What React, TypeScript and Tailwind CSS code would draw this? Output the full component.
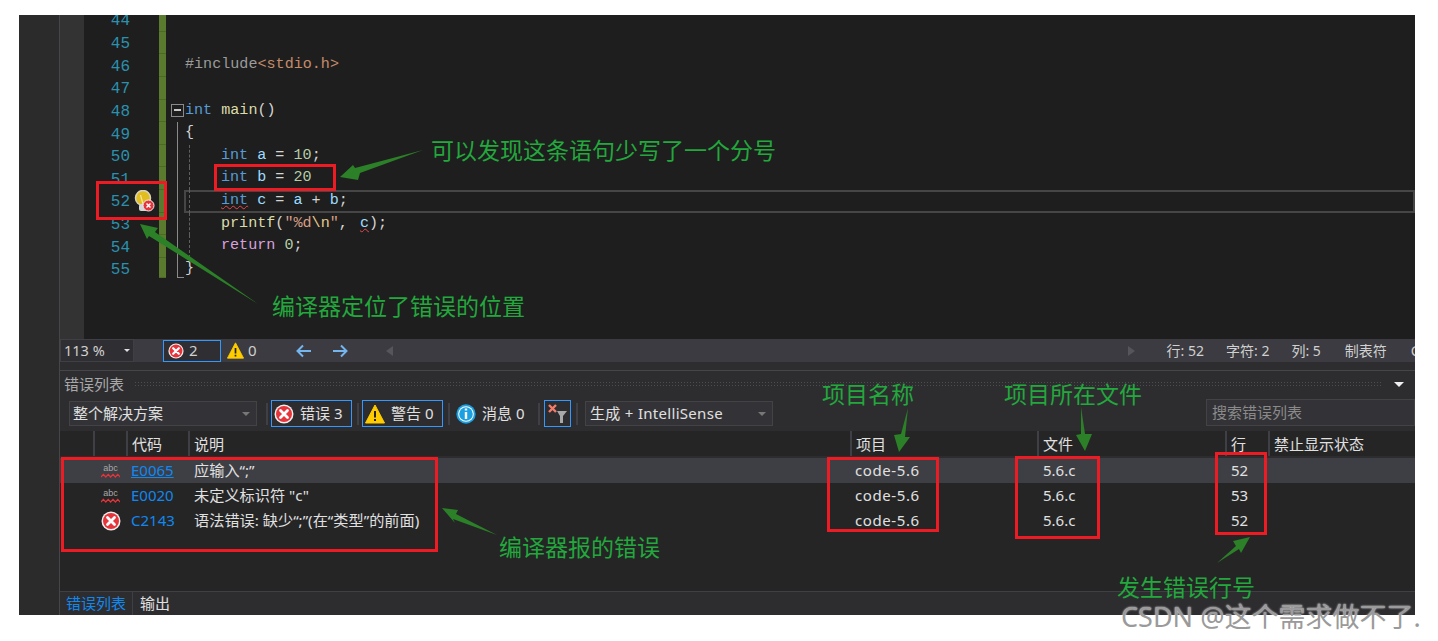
import React from 'react';

const ErrorIcon = ({ size = 20 }: { size?: number }) => (
  <svg width={size} height={size} viewBox="0 0 20 20" className="shrink-0">
    <circle cx="10" cy="10" r="9.5" fill="#f0f0f0" />
    <circle cx="10" cy="10" r="8" fill="#e5343a" />
    <path d="M6.5 6.5l7 7M13.5 6.5l-7 7" stroke="#fff" strokeWidth="2.8" strokeLinecap="round" />
  </svg>
);

const WarnIcon = ({ size = 20 }: { size?: number }) => (
  <svg width={size} height={size} viewBox="0 0 20 20" className="shrink-0">
    <path d="M10 1L19.5 19H0.5z" fill="#fc0" stroke="#fc0" strokeLinejoin="round" />
    <path d="M10 7v6.5M10 15v2" stroke="#222" strokeWidth="2" />
  </svg>
);

const InfoIcon = () => (
  <svg width="20" height="20" viewBox="0 0 20 20" className="shrink-0">
    <circle cx="10" cy="10" r="9.7" fill="#1ba1e2" />
    <circle cx="10" cy="10" r="7.8" fill="#fff" />
    <circle cx="10" cy="10" r="6.8" fill="#1ba1e2" />
    <path d="M10 8v7M10 4.5v2" stroke="#fff" strokeWidth="2.4" />
  </svg>
);

const AbcIcon = () => (
  <div className="flex flex-col items-center w-[19px] leading-none">
    <span className="text-[9px] leading-[10px] text-[#a8a8a8] [font-family:'Liberation_Sans',sans-serif]">abc</span>
    <svg width="19" height="5" viewBox="0 0 19 5">
      <path d="M0 4l2.4-2.6 2.4 2.6 2.4-2.6 2.4 2.6 2.4-2.6 2.4 2.6 2.4-2.6 2.4 2.6" fill="none" stroke="#e5343a" strokeWidth="1.2" />
    </svg>
  </div>
);

const Sep = ({ className }: { className: string }) => <div className={`w-[2px] h-[22px] bg-[#3f3f46] shrink-0 ${className}`} />;

const Kw = ({ children }: { children: React.ReactNode }) => <span className="text-[#569cd6]">{children}</span>;
const Fn = ({ children }: { children: React.ReactNode }) => <span className="text-[#dcdcaa]">{children}</span>;
const Var = ({ children }: { children: React.ReactNode }) => <span className="text-[#9cdcfe]">{children}</span>;
const Num = ({ children }: { children: React.ReactNode }) => <span className="text-[#b5cea8]">{children}</span>;

const Indented = ({ children }: { children: React.ReactNode }) => (
  <div className="ml-[5px] h-full pl-[31px] flex items-center border-l border-dashed border-[#5f5f5f]">
    <span className="whitespace-pre pb-[2px]">{children}</span>
  </div>
);

// line number, fold marker and code of each editor row
const codeLines: { n: number; fold?: 'box' | 'line' | 'end'; code?: React.ReactNode; current?: boolean }[] = [
  { n: 44 },
  { n: 45 },
  { n: 46, code: <div className="pl-[1px] pb-[2px]"><span className="text-[#9b9b9b]">#include</span><span className="text-[#c58b6b]">&lt;stdio.h&gt;</span></div> },
  { n: 47 },
  { n: 48, fold: 'box', code: <div className="pl-[1px] pb-[2px] whitespace-pre"><Kw>int</Kw> <Fn>main</Fn>()</div> },
  { n: 49, fold: 'line', code: <div className="pl-[1px] pb-[2px]">{'{'}</div> },
  { n: 50, fold: 'line', code: <Indented><Kw>int</Kw> <Var>a</Var> = <Num>10</Num>;</Indented> },
  { n: 51, fold: 'line', code: <Indented><Kw>int</Kw> <Var>b</Var> = <Num>20</Num></Indented> },
  { n: 52, fold: 'line', current: true, code: <Indented><span className="text-[#569cd6] underline decoration-wavy decoration-[#e5484d] decoration-1">int</span> <Var>c</Var> = <Var>a</Var> + <Var>b</Var>;</Indented> },
  { n: 53, fold: 'line', code: <Indented><Fn>printf</Fn>(<span className="text-[#d69d85]">"%d</span><span className="text-[#e8c98f]">\n</span><span className="text-[#d69d85]">"</span>, <span className="ml-[3px] text-[#9cdcfe] underline decoration-wavy decoration-[#e5484d] decoration-1">c</span>);</Indented> },
  { n: 54, fold: 'line', code: <Indented><span className="text-[#d8a0df]">return</span> <Num>0</Num>;</Indented> },
  { n: 55, fold: 'end', code: <div className="pl-[1px] pb-[2px]">{'}'}</div> },
];

const errors = [
  { icon: 'abc', code: 'E0065', desc: '应输入“;”', line: 52, selected: true },
  { icon: 'abc', code: 'E0020', desc: '未定义标识符 "c"', line: 53 },
  { icon: 'err', code: 'C2143', desc: '语法错误: 缺少“;”(在“类型”的前面)', line: 52 },
];

const tableCols = 'grid grid-cols-[33px_33px_62px_662px_187px_188px_43px_147px]';

const Annotation = ({ className, children }: { className: string; children: React.ReactNode }) => (
  <div className={`absolute text-[23px] leading-[30px] text-[#22a83c] whitespace-nowrap ${className}`}>{children}</div>
);

export default function App() {
  return (
    <div className="relative w-[1438px] h-[641px] bg-white overflow-hidden [font-family:'Noto_Sans','Noto_Sans_CJK_SC',sans-serif] text-[15px] text-[#e0e0e0]">
      <div className="absolute left-[19px] top-[15px] w-[1396px] h-[600px] flex bg-[#2d2d2d]">
        <div className="w-[40px] shrink-0 bg-[#2b2b2b]" />
        <div className="w-[1356px] flex flex-col border-l border-[#45454a]">
          {/* Editor */}
          <div className="h-[324px] shrink-0 flex bg-[#1e1e1e] overflow-hidden">
            <div className="w-[24px] shrink-0 bg-[#333333]" />
            <div className="flex-1 flex flex-col -mt-[6px] [font-family:'Liberation_Mono',monospace] text-[15.1px] text-[#d4d4d4]">
              {codeLines.map(l => (
                <div key={l.n} className="flex h-[22.65px] shrink-0 items-center">
                  <div className="w-[46px] pt-[2px] text-right text-[#2b91af] text-[16px]">{l.n}</div>
                  <div className="w-[29px] h-full flex items-center pl-[4px] shrink-0">
                    {l.current && (
                      <div className="relative w-[21px] h-[22px]">
                        <svg width="21" height="22" viewBox="0 0 21 22">
                          <circle cx="9" cy="8" r="7.5" fill="#e2bd1f" stroke="#d9d4c0" strokeWidth="1.5" />
                          <rect x="5" y="14" width="9" height="7" rx="2" fill="#d6d6d6" />
                          <path d="M6.5 5l2.5 9" stroke="#f3e6a0" strokeWidth="1.2" />
                          <circle cx="14.5" cy="15.5" r="5.5" fill="#e5343a" stroke="#eee" />
                          <path d="M12.5 13.5l4 4M16.5 13.5l-4 4" stroke="#fff" strokeWidth="1.5" />
                        </svg>
                      </div>
                    )}
                  </div>
                  <div className={`w-[7px] bg-[#5a7a2e] border-b border-[#4c6a26] shrink-0 self-start ${l.n === 55 ? 'h-[20px]' : 'h-full'}`} />
                  <div className="w-[18px] h-full shrink-0 flex">
                    {l.fold === 'box' && (
                      <div className="ml-[5px] mt-[4px] w-[13px] h-[13px] border border-[#8a8a8a] flex items-center justify-center">
                        <div className="w-[7px] h-[2px] bg-[#c8c8c8]" />
                      </div>
                    )}
                    {l.fold === 'line' && <div className="ml-[11px] w-[1px] h-full bg-[#8a8a8a]" />}
                    {l.fold === 'end' && <div className="ml-[11px] w-[7px] h-[20px] border-l border-b border-[#8a8a8a]" />}
                  </div>
                  <div className={`flex-1 h-full flex items-center ${l.current ? 'shadow-[inset_0_0_0_2px_#464646]' : ''}`}>
                    {l.code}
                  </div>
                </div>
              ))}
            </div>
          </div>

          {/* Editor status bar */}
          <div className="h-[23px] shrink-0 flex items-center bg-[#3b3b41] text-[#d0d0d0] text-[14px] leading-none overflow-hidden">
            <div className="w-[74px] h-full bg-[#2f2f33] border border-[#3f3f46] flex items-center justify-between pl-[3px] pr-[3px] text-[14.5px] shrink-0">
              <span>113 %</span>
              <div className="w-0 h-0 border-x-[3px] border-x-transparent border-t-[3px] border-t-[#e0e0e0]" />
            </div>
            <div className="ml-[29px] w-[58px] h-[22px] bg-[#2f2f33] border border-[#3399ff] flex items-center pl-[4px] gap-[5px] text-[15px] shrink-0">
              <ErrorIcon size={16} />
              <span>2</span>
            </div>
            <div className="ml-[6px] flex items-center gap-[4px] text-[15px] shrink-0">
              <WarnIcon size={17} />
              <span>0</span>
            </div>
            <svg width="16" height="14" viewBox="0 0 16 14" className="ml-[39px] shrink-0">
              <path d="M15 7H2M7 1.5L1.5 7 7 12.5" fill="none" stroke="#75b5ee" strokeWidth="2" />
            </svg>
            <svg width="16" height="14" viewBox="0 0 16 14" className="ml-[20px] shrink-0">
              <path d="M1 7h13M9 1.5L14.5 7 9 12.5" fill="none" stroke="#75b5ee" strokeWidth="2" />
            </svg>
            <div className="ml-[38px] w-0 h-0 border-y-[5px] border-y-transparent border-r-[7px] border-r-[#55555b] shrink-0" />
            <div className="ml-[735px] w-0 h-0 border-y-[5px] border-y-transparent border-l-[7px] border-l-[#55555b] shrink-0" />
            <span className="ml-[32px] whitespace-nowrap">行: 52</span>
            <span className="ml-[22px] whitespace-nowrap">字符: 2</span>
            <span className="ml-[22px] whitespace-nowrap">列: 5</span>
            <span className="ml-[24px] whitespace-nowrap">制表符</span>
            <span className="ml-[24px] whitespace-nowrap">C</span>
          </div>

          <div className="h-[8px] shrink-0 bg-[#2d2d30]" />

          {/* Error list panel */}
          <div className="flex-1 flex flex-col bg-[#2d2d30] border-t border-[#45454a] min-h-0 overflow-hidden">
            <div className="h-[26px] shrink-0 flex items-center pl-[4px] pr-[11px]">
              <span className="text-[#a8a8a8] whitespace-nowrap leading-none">错误列表</span>
              <div className="ml-[10px] w-[1248px] h-[6px] bg-[radial-gradient(circle,#4c4c52_0.8px,transparent_0.8px)] bg-[length:3px_3px]" />
              <div className="ml-auto w-0 h-0 border-x-[5px] border-x-transparent border-t-[5px] border-t-[#f0f0f0]" />
            </div>
            <div className="h-[34px] shrink-0 pt-[3px]">
              <div className="h-[27px] flex items-center leading-none">
                <div className="ml-[9px] w-[188px] h-[25px] bg-[#333337] border border-[#434346] flex items-center justify-between pl-[3px] pr-[6px] shrink-0">
                  <span>整个解决方案</span>
                  <div className="w-0 h-0 border-x-[4px] border-x-transparent border-t-[4px] border-t-[#777]" />
                </div>
                <Sep className="ml-[9px]" />
                <div className="ml-[3px] w-[81px] h-[27px] border border-[#3399ff] flex items-center pl-[2px] gap-[6px] shrink-0">
                  <ErrorIcon />
                  <span>错误 3</span>
                </div>
                <Sep className="ml-[5px]" />
                <div className="ml-[3px] w-[81px] h-[27px] border border-[#3399ff] flex items-center pl-[2px] gap-[6px] shrink-0">
                  <WarnIcon />
                  <span>警告 0</span>
                </div>
                <Sep className="ml-[5px]" />
                <div className="ml-[6px] flex items-center gap-[6px] shrink-0">
                  <InfoIcon />
                  <span className="w-[43px] whitespace-nowrap">消息 0</span>
                </div>
                <Sep className="ml-[13px]" />
                <div className="ml-[4px] w-[27px] h-[27px] border border-[#3399ff] shrink-0">
                  <svg width="25" height="25" viewBox="0 0 25 25">
                    <path d="M4 4l7 7M11 4l-7 7" stroke="#f47c6a" strokeWidth="2.4" />
                    <path d="M12 10h10l-4 5v7h-3v-7z" fill="#a8a8a8" />
                  </svg>
                </div>
                <Sep className="ml-[5px]" />
                <div className="ml-[7px] w-[188px] h-[25px] bg-[#333337] border border-[#434346] flex items-center justify-between pl-[4px] pr-[6px] shrink-0">
                  <span className="whitespace-nowrap tracking-[0.3px]">生成 + IntelliSense</span>
                  <div className="w-0 h-0 border-x-[4px] border-x-transparent border-t-[4px] border-t-[#777]" />
                </div>
                <div className="ml-auto w-[209px] h-[27px] -mt-[2px] bg-[#333337] border border-[#434346] flex items-center pl-[5px] text-[#8a8a8a] shrink-0">
                  搜索错误列表
                </div>
              </div>
            </div>

            {/* Table */}
            <div className={`${tableCols} h-[27px] shrink-0 bg-[#252526] border-b-2 border-[#2d2d30] leading-none items-stretch`}>
              <div />
              <div className="border-l-2 border-[#3f3f46] flex justify-end pr-[3px] pt-[3px]">
                <div className="w-[6px] h-[6px] bg-[radial-gradient(circle,#999_0.7px,transparent_0.7px)] bg-[length:2px_2px]" />
              </div>
              {['代码', '说明', '项目', '文件', '行', '禁止显示状态'].map(h => (
                <div key={h} className="border-l-2 border-[#3f3f46] pl-[4px] pt-[2px] flex items-center whitespace-nowrap">{h}</div>
              ))}
            </div>
            <div className="flex-1 bg-[#252526] min-h-0">
              {errors.map(e => (
                <div key={e.code} className={`${tableCols} h-[25px] items-center leading-none ${e.selected ? 'bg-[#3e3e45]' : ''}`}>
                  <div />
                  <div className="flex justify-center pl-[2px]">{e.icon === 'abc' ? <AbcIcon /> : <ErrorIcon />}</div>
                  <div className={`pl-[5px] text-[#1188ee] ${e.selected ? 'underline' : ''}`}>{e.code}</div>
                  <div className="pl-[6px] text-[15.2px] whitespace-nowrap">{e.desc}</div>
                  <div className="pl-[5px] tracking-[0.6px]">code-5.6</div>
                  <div className="pl-[6px]">5.6.c</div>
                  <div className="pl-[6px]">{e.line}</div>
                  <div />
                </div>
              ))}
            </div>
            <div className="h-[24px] shrink-0 flex items-center border-t border-[#3f3f46] leading-none">
              <span className="ml-[6px] text-[#1188ee] whitespace-nowrap">错误列表</span>
              <div className="ml-[6px] w-[1px] h-full bg-[#3f3f46]" />
              <span className="ml-[7px]">输出</span>
            </div>
          </div>
        </div>
      </div>

      {/* Red boxes */}
      <div className="absolute left-[96px] top-[181px] w-[71px] h-[39px] border-[3px] border-[#ed1c24]" />
      <div className="absolute left-[214px] top-[164px] w-[122px] h-[27px] border-[3px] border-[#ed1c24]" />
      <div className="absolute left-[61px] top-[457px] w-[377px] h-[95px] border-[3px] border-[#ed1c24]" />
      <div className="absolute left-[827px] top-[457px] w-[112px] h-[75px] border-[3px] border-[#ed1c24]" />
      <div className="absolute left-[1015px] top-[456px] w-[85px] h-[83px] border-[3px] border-[#ed1c24]" />
      <div className="absolute left-[1215px] top-[452px] w-[52px] h-[83px] border-[3px] border-[#ed1c24]" />

      {/* Arrows */}
      <svg width="1438" height="641" viewBox="0 0 1438 641" className="absolute left-0 top-0 pointer-events-none">
        <g fill="#2b8028">
          <polygon points="340,177 353,165 355,168 423,150 360,173 358,180" />
          <polygon points="140,224 158,228 155,232 258,304 149,236 147,239" />
          <polygon points="442,508 458,510 456,514 497,535 453,519 455,523" />
          <polygon points="899,452 894,435 901,434 908,408 905,437 910,437" />
          <polygon points="1085,451 1076,435 1081,434 1081,407 1085,434 1092,434" />
          <polygon points="1250,537 1233,541 1236,546 1217,563 1239,549 1241,553" />
        </g>
      </svg>

      {/* Annotations */}
      <Annotation className="left-[431px] top-[135px]">可以发现这条语句少写了一个分号</Annotation>
      <Annotation className="left-[272px] top-[291px]">编译器定位了错误的位置</Annotation>
      <Annotation className="left-[822px] top-[379px]">项目名称</Annotation>
      <Annotation className="left-[1004px] top-[379px]">项目所在文件</Annotation>
      <Annotation className="left-[499px] top-[532px]">编译器报的错误</Annotation>
      <Annotation className="left-[1117px] top-[572px]">发生错误行号</Annotation>

      {/* Watermark */}
      <div className="absolute left-[1121px] top-[601px] text-[27px] leading-[32px] text-[#9a9a9a] whitespace-nowrap [text-shadow:0_0_2px_#ffffff]">
        CSDN @这个需求做不了.
      </div>
    </div>
  );
}
